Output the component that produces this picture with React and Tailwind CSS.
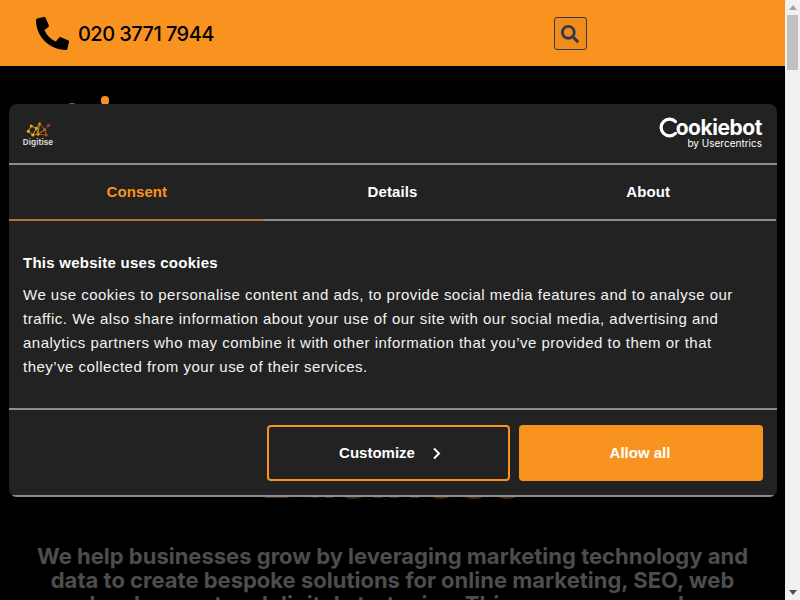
import React from "react";
import { FaPhoneAlt, FaSearch } from "react-icons/fa";

function DigitiseLogo() {
  const nodes = [[6,15,"#f0b31a"],[10,8,"#e8a61a"],[17,11,"#eda51c"],[12,20,"#f0b31a"],[21,5,"#d9821c"],[28,13,"#c0651c"],[33,7,"#a8481c"],[30,20,"#b0521c"],[19,19,"#dd8f1c"]];
  const links = [[0,1],[0,3],[1,2],[2,3],[2,4],[4,5],[5,6],[5,7],[2,8],[8,7],[4,8],[3,8],[5,8]];
  return (
    <div className="flex flex-col items-center w-[30px]">
      <svg width="30" height="18" viewBox="0 0 38 24">
        {links.map(([a, b], i) => (
          <line key={i} x1={nodes[a][0]} y1={nodes[a][1]} x2={nodes[b][0]} y2={nodes[b][1]} stroke={nodes[b][2]} strokeWidth="1.2" />
        ))}
        {nodes.map(([x, y, c], i) => (
          <circle key={i} cx={x} cy={y} r="2" fill={c} />
        ))}
      </svg>
      <span className="text-[8px] leading-[9px] font-bold text-[#d8d8d8] font-['Inter',sans-serif] tracking-[0.1px]">Digitise</span>
    </div>
  );
}

function CookiebotLogo() {
  return (
    <div className="flex flex-col items-end mb-[2px] text-white font-['Inter',sans-serif]">
      <div className="flex items-end h-[21px]">
        <svg width="20" height="21" viewBox="0 0 20 21" className="mr-[-2px]">
          <path d="M17.5 4.6A8.4 8.4 0 1 0 17.5 16.4" fill="none" stroke="#fff" strokeWidth="3.2" strokeLinecap="round" />
        </svg>
        <span className="text-[21px] leading-[21px] font-bold tracking-[-0.45px]">ookiebot</span>
      </div>
      <span className="text-[10px] leading-[11px] font-normal">by Usercentrics</span>
    </div>
  );
}

function Scrollbar() {
  return (
    <div className="w-[15px] h-full shrink-0 bg-[#f1f1f1] flex flex-col items-center">
      <div className="h-[15px] w-full flex items-center justify-center">
        <svg width="8" height="5" viewBox="0 0 8 5"><path d="M4 0L8 5H0Z" fill="#a3a3a3" /></svg>
      </div>
      <div className="w-[11px] h-[55px] bg-[#c1c1c1]" />
      <div className="flex-1" />
      <div className="h-[15px] w-full flex items-center justify-center">
        <svg width="8" height="5" viewBox="0 0 8 5"><path d="M4 5L8 0H0Z" fill="#505050" /></svg>
      </div>
    </div>
  );
}

function Tab({ active, children }) {
  return (
    <div className={`flex-1 h-[56px] flex items-center justify-center text-[15px] font-bold tracking-[0.1px] border-b-2 ${active ? "text-[#f9931f] border-[#a97a35]" : "text-white border-[#8e8e8e]"}`}>
      <span>{children}</span>
    </div>
  );
}

export default function App() {
  return (
    <div className="w-[800px] h-[600px] overflow-hidden flex bg-black font-['Liberation_Sans',sans-serif]">
      <main className="relative flex-1 min-w-0 h-full overflow-hidden">
        <header className="h-[66px] bg-[#f9931f] flex items-center pl-[36px]">
          <FaPhoneAlt className="text-black text-[33px]" />
          <span className="ml-[9px] mt-[1px] text-[20px] leading-none font-medium text-black font-['Inter',sans-serif] tracking-[-0.55px]">020 3771 7944</span>
          <button className="ml-[340px] w-[33px] h-[33px] flex items-center justify-center rounded-[3px] border border-[#333a45] bg-[#ef8c1c] mt-[1px]">
            <FaSearch className="text-[#333a45] text-[18px]" />
          </button>
        </header>

        <div className="h-[38px] relative">
          <div className="absolute left-[101px] top-[30px] w-[8px] h-[9px] rounded-full bg-[#f9931f]" />
          <div className="absolute left-[69px] top-[37px] w-[6px] h-[2px] rounded-full bg-[#8a5412]" />
        </div>

        <h1 className="pt-[343px] text-center text-[59px] leading-[60px] font-bold text-[#40280c] font-['Inter',sans-serif]">Business</h1>

        <p className="mt-[37px] px-[30px] text-center text-[22px] leading-[24px] font-bold text-[#4d4d4d] font-['Inter',sans-serif]">
          We help businesses grow by leveraging marketing technology and data to create bespoke solutions for online marketing, SEO, web development and digital strategies. This ensures we make
        </p>

        <section className="absolute left-[9px] top-[104px] w-[768px] h-[393px] bg-[#222222] rounded-[8px] flex flex-col text-white overflow-hidden">
          <div className="h-[61px] shrink-0 flex items-center justify-between pl-[14px] pr-[15px] border-b-2 border-[#8e8e8e]">
            <DigitiseLogo />
            <CookiebotLogo />
          </div>
          <nav className="flex shrink-0 pr-[1px]">
            <Tab active>Consent</Tab>
            <Tab>Details</Tab>
            <Tab>About</Tab>
          </nav>
          <div className="flex-1 px-[14px] pt-[32px]">
            <h2 className="text-[15px] leading-[20px] font-bold tracking-[0.26px] mb-[10px]">This website uses cookies</h2>
            <p className="text-[15px] leading-[24px] tracking-[0.49px] text-[#f2f2f2]">
              We use cookies to personalise content and ads, to provide social media features and to analyse our traffic. We also share information about your use of our site with our social media, advertising and analytics partners who may combine it with other information that you’ve provided to them or that they’ve collected from your use of their services.
            </p>
          </div>
          <div className="h-[89px] shrink-0 flex justify-end gap-[9px] pt-[15px] pr-[14px] border-t-2 border-[#8e8e8e] border-b-2">
            <button className="w-[243px] h-[56px] pl-[3px] rounded-[4px] border-2 border-[#f9931f] flex items-center justify-center text-[15px] font-bold">
              Customize
              <svg width="9" height="13" viewBox="0 0 9 13" className="ml-[17px] mt-[1px]">
                <path d="M2 1.5L7 6.5L2 11.5" fill="none" stroke="#fff" strokeWidth="2" />
              </svg>
            </button>
            <button className="w-[244px] h-[56px] pr-[2px] rounded-[4px] bg-[#f9931f] flex items-center justify-center text-[15px] font-bold">
              Allow all
            </button>
          </div>
        </section>
      </main>
      <Scrollbar />
    </div>
  );
}
